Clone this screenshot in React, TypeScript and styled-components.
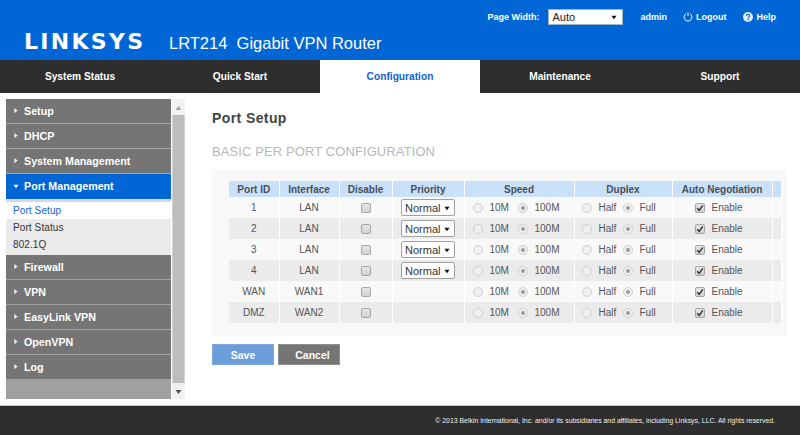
import React from 'react'
import styled, { createGlobalStyle } from 'styled-components'

const GlobalStyle = createGlobalStyle`
    html, body {
        margin: 0;
        padding: 0;
        background: #fff;
        font-family: 'Liberation Sans', Arial, sans-serif;
    }
`

const Page = styled.div`
    width: 800px;
    height: 435px;
    display: flex;
    flex-direction: column;
    overflow: hidden;
`

const Header = styled.header`
    height: 60px;
    background: #0066d6;
    color: #fff;
    display: flex;
    flex-direction: column;
    justify-content: space-between;
    box-sizing: border-box;
    padding: 9px 24px 0 24px;
`

const UserBar = styled.div`
    display: flex;
    justify-content: flex-end;
    align-items: center;
    height: 16px;
    font-size: 9px;
    font-weight: bold;
`

const UserLabel = styled.span`
    margin-right: 9px;
`

const UserName = styled.span`
    margin: 0 16px 0 17px;
`

const UserLink = styled.span`
    display: flex;
    align-items: center;
    gap: 3px;
    margin-left: ${(p: { $gap?: number }) => p.$gap ?? 0}px;
`

const TopSelect = styled.div`
    width: 75px;
    height: 16px;
    box-sizing: border-box;
    background: #fff;
    border: 1px solid #9db4d0;
    color: #222;
    font-size: 11px;
    font-weight: normal;
    display: flex;
    align-items: center;
    justify-content: space-between;
    padding: 0 5px 0 3px;
`

const Brand = styled.div`
    display: flex;
    align-items: baseline;
    height: 31px;
`

const Logo = styled.div`
    font-family: 'DejaVu Sans', sans-serif;
    font-size: 22px;
    font-weight: bold;
    letter-spacing: 2.3px;
    width: 145px;
`

const Product = styled.div`
    font-size: 16.5px;
    white-space: pre;
`

const Nav = styled.nav`
    height: 33px;
    background: #2e2e2e;
    display: flex;
`

const Tab = styled.div<{ $active?: boolean }>`
    width: 160px;
    display: flex;
    align-items: center;
    justify-content: center;
    padding-bottom: 1px;
    box-sizing: border-box;
    font-size: 10.2px;
    font-weight: bold;
    color: ${(p) => (p.$active ? '#0f62d8' : '#fff')};
    background: ${(p) => (p.$active ? '#fff' : 'transparent')};
`

const Body = styled.div`
    flex: 1;
    display: flex;
    min-height: 0;
`

const SideWrap = styled.div`
    display: flex;
    padding: 6px 0 6px 6px;
    flex-shrink: 0;
`

const Menu = styled.div`
    width: 165px;
    display: flex;
    flex-direction: column;
    background: #a0a0a0;
`

const MenuItem = styled.div<{ $open?: boolean }>`
    height: 25px;
    box-sizing: border-box;
    flex-shrink: 0;
    display: flex;
    align-items: center;
    gap: 5px;
    padding-left: 7px;
    font-size: 10.7px;
    font-weight: bold;
    color: #fff;
    background: ${(p) => (p.$open ? '#0066d6' : '#757575')};
    border-bottom: 1px solid ${(p) => (p.$open ? '#0066d6' : '#a3a3a3')};
`

const SubMenu = styled.div`
    background: #ebebeb;
    padding: 3px 0 2px;
    flex-shrink: 0;
    box-shadow: inset 0 3px 0 #d8d8d8;
`

const SubItem = styled.div<{ $active?: boolean }>`
    height: 17px;
    padding-left: 7px;
    display: flex;
    align-items: center;
    font-size: 10px;
    letter-spacing: 0.1px;
    color: ${(p) => (p.$active ? '#0f62d8' : '#333')};
    background: ${(p) => (p.$active ? '#fff' : 'transparent')};
`

const Scrollbar = styled.div`
    width: 13px;
    margin-left: 1px;
    display: flex;
    flex-direction: column;
`

const ScrollButton = styled.div`
    height: 16px;
    background: #f1f1f1;
    display: flex;
    align-items: center;
    justify-content: center;
`

const ScrollThumb = styled.div`
    flex: 1;
    background: #bdbdbd;
    border-left: 1px solid #d2d2d2;
    border-right: 1px solid #d2d2d2;
`

const Main = styled.main`
    flex: 1;
    padding: 17px 14px 0 27px;
`

const Title = styled.h1`
    margin: 0;
    font-size: 14px;
    line-height: 16px;
    letter-spacing: 0.4px;
    font-weight: bold;
    color: #444;
`

const Subtitle = styled.h2`
    margin: 18px 0 9px;
    font-size: 13px;
    line-height: 16px;
    letter-spacing: 0.1px;
    font-weight: normal;
    color: #b8b8b8;
`

const Panel = styled.div`
    background: #f8f8f8;
    padding: 12px 5px 13px 17px;
`

const Table = styled.table`
    border-collapse: collapse;
    table-layout: fixed;
    width: 552px;
    font-size: 10px;
    color: #555;
`

const HeadCell = styled.th`
    height: 16px;
    padding: 0;
    background: #c9e0f9;
    font-weight: bold;
    font-size: 10px;
    color: #4a4f57;
    border-right: 1px solid #fff;
`

const Row = styled.tr<{ $shaded: boolean }>`
    height: 21px;
    background: ${(p) => (p.$shaded ? '#ebebeb' : '#f9f9f9')};
`

const Cell = styled.td`
    padding: 0;
    text-align: center;
    border-right: 1px solid #fff;
`

const OptionGroup = styled.div<{ $left: number }>`
    display: flex;
    align-items: center;
    padding-left: ${(p) => p.$left}px;
`

const OptionText = styled.span<{ $width: number }>`
    width: ${(p) => p.$width}px;
    margin-left: 7px;
    text-align: left;
`

const CheckBox = styled.span`
    display: inline-flex;
    align-items: center;
    justify-content: center;
    width: 10px;
    height: 10px;
    box-sizing: border-box;
    border: 1px solid #a6a6a6;
    border-radius: 2px;
    background: linear-gradient(#e6e6e6, #d2d2d2);
    vertical-align: middle;
`

const RadioDot = styled.span<{ $on?: boolean }>`
    display: inline-flex;
    align-items: center;
    justify-content: center;
    width: 10px;
    height: 10px;
    box-sizing: border-box;
    border: 1px solid #d0d0d0;
    border-radius: 50%;
    background: #f0f0f0;
    flex-shrink: 0;

    &::after {
        content: '';
        display: ${(p) => (p.$on ? 'block' : 'none')};
        width: 4px;
        height: 4px;
        border-radius: 50%;
        background: #9a9a9a;
    }
`

const PrioritySelect = styled.div`
    width: 54px;
    height: 17px;
    margin: 0 auto;
    box-sizing: border-box;
    background: #fff;
    border: 1px solid #a0a0a0;
    border-radius: 2px;
    color: #333;
    font-size: 11px;
    display: flex;
    align-items: center;
    justify-content: space-between;
    padding: 0 4px 0 3px;
`

const Actions = styled.div`
    display: flex;
    gap: 4px;
    margin-top: 8px;
`

const ActionButton = styled.div<{ $primary?: boolean }>`
    width: 62px;
    height: 21px;
    box-sizing: border-box;
    display: flex;
    align-items: center;
    justify-content: center;
    padding-left: ${(p) => (p.$primary ? 0 : 7)}px;
    font-size: 10.5px;
    font-weight: bold;
    color: #fff;
    background: ${(p) => (p.$primary ? '#6c9ddb' : '#757575')};
    border: 1px solid ${(p) => (p.$primary ? '#7fa8dc' : '#8f8f8f')};
`

const Footer = styled.footer`
    height: 30px;
    box-sizing: border-box;
    background: #2e2e2e;
    border-top: 1px solid #c8c8c8;
    color: #f0f0f0;
    font-size: 6.9px;
    display: flex;
    align-items: center;
    justify-content: flex-end;
    padding: 0 25px 1px 0;
`

const Triangle = ({ dir, color, size = 6 }: { dir: 'up' | 'down' | 'right'; color: string; size?: number }) => {
    const points = { up: '0,6 3,2 6,6', down: '0,2 6,2 3,6', right: '1,0 5,3 1,6' }[dir]
    return (
        <svg width={size} height={size} viewBox="0 0 6 7">
            <polygon points={points} fill={color} />
        </svg>
    )
}

const LogoutIcon = () => (
    <svg width="10" height="10" viewBox="0 0 10 10" fill="none" stroke="#fff">
        <path d="M3 1.8a3.9 3.9 0 1 0 4 0" strokeWidth="1" />
        <path d="M5 .5v3.5" strokeWidth="1" />
    </svg>
)

const HelpIcon = () => (
    <svg width="10" height="10" viewBox="0 0 10 10">
        <circle cx="5" cy="5" r="5" fill="#dfe8f5" />
        <path d="M3.4 3.9a1.6 1.5 0 1 1 2.4 1.3c-.6.4-.8.6-.8 1.2" fill="none" stroke="#0066d6" strokeWidth="1.1" />
        <rect x="4.4" y="7" width="1.2" height="1.2" fill="#0066d6" />
    </svg>
)

const Tick = () => (
    <svg width="8" height="8" viewBox="0 0 8 8">
        <path d="M1.2 4.2 3.2 6.4 6.8 1.4" fill="none" stroke="#333" strokeWidth="1.5" />
    </svg>
)

const upperMenu = ['Setup', 'DHCP', 'System Management']
const lowerMenu = ['Firewall', 'VPN', 'EasyLink VPN', 'OpenVPN', 'Log']
const columns = [
    ['Port ID', 50],
    ['Interface', 60],
    ['Disable', 53],
    ['Priority', 72],
    ['Speed', 110],
    ['Duplex', 98],
    ['Auto Negotiation', 100],
    ['', 9],
] as const
const ports = [
    { id: '1', name: 'LAN', priority: true },
    { id: '2', name: 'LAN', priority: true },
    { id: '3', name: 'LAN', priority: true },
    { id: '4', name: 'LAN', priority: true },
    { id: 'WAN', name: 'WAN1', priority: false },
    { id: 'DMZ', name: 'WAN2', priority: false },
]

export default function App() {
    return (
        <Page>
            <GlobalStyle />
            <Header>
                <UserBar>
                    <UserLabel>Page Width:</UserLabel>
                    <TopSelect>
                        Auto
                        <Triangle dir="down" color="#111" />
                    </TopSelect>
                    <UserName>admin</UserName>
                    <UserLink>
                        <LogoutIcon />
                        Logout
                    </UserLink>
                    <UserLink $gap={17}>
                        <HelpIcon />
                        Help
                    </UserLink>
                </UserBar>
                <Brand>
                    <Logo>LINKSYS</Logo>
                    <Product>LRT214  Gigabit VPN Router</Product>
                </Brand>
            </Header>
            <Nav>
                <Tab>System Status</Tab>
                <Tab>Quick Start</Tab>
                <Tab $active>Configuration</Tab>
                <Tab>Maintenance</Tab>
                <Tab>Support</Tab>
            </Nav>
            <Body>
                <SideWrap>
                    <Menu>
                        {upperMenu.map((m) => (
                            <MenuItem key={m}>
                                <Triangle dir="right" color="#eee" />
                                {m}
                            </MenuItem>
                        ))}
                        <MenuItem $open>
                            <Triangle dir="down" color="#fff" />
                            Port Management
                        </MenuItem>
                        <SubMenu>
                            <SubItem $active>Port Setup</SubItem>
                            <SubItem>Port Status</SubItem>
                            <SubItem>802.1Q</SubItem>
                        </SubMenu>
                        {lowerMenu.map((m) => (
                            <MenuItem key={m}>
                                <Triangle dir="right" color="#eee" />
                                {m}
                            </MenuItem>
                        ))}
                    </Menu>
                    <Scrollbar>
                        <ScrollButton>
                            <Triangle dir="up" color="#a8a8a8" size={7} />
                        </ScrollButton>
                        <ScrollThumb />
                        <ScrollButton>
                            <Triangle dir="down" color="#555" size={7} />
                        </ScrollButton>
                    </Scrollbar>
                </SideWrap>
                <Main>
                    <Title>Port Setup</Title>
                    <Subtitle>BASIC PER PORT CONFIGURATION</Subtitle>
                    <Panel>
                        <Table>
                            <colgroup>
                                {columns.map(([label, width]) => (
                                    <col key={label} width={width} />
                                ))}
                            </colgroup>
                            <thead>
                                <tr>
                                    {columns.map(([label]) => (
                                        <HeadCell key={label}>{label}</HeadCell>
                                    ))}
                                </tr>
                            </thead>
                            <tbody>
                                {ports.map((port, i) => (
                                    <Row key={port.id} $shaded={i % 2 === 1}>
                                        <Cell>{port.id}</Cell>
                                        <Cell>{port.name}</Cell>
                                        <Cell>
                                            <CheckBox />
                                        </Cell>
                                        <Cell>
                                            {port.priority && (
                                                <PrioritySelect>
                                                    Normal
                                                    <Triangle dir="down" color="#111" />
                                                </PrioritySelect>
                                            )}
                                        </Cell>
                                        <Cell>
                                            <OptionGroup $left={8}>
                                                <RadioDot />
                                                <OptionText $width={28}>10M</OptionText>
                                                <RadioDot $on />
                                                <OptionText $width={30}>100M</OptionText>
                                            </OptionGroup>
                                        </Cell>
                                        <Cell>
                                            <OptionGroup $left={7}>
                                                <RadioDot />
                                                <OptionText $width={24}>Half</OptionText>
                                                <RadioDot $on />
                                                <OptionText $width={20}>Full</OptionText>
                                            </OptionGroup>
                                        </Cell>
                                        <Cell>
                                            <OptionGroup $left={22}>
                                                <CheckBox>
                                                    <Tick />
                                                </CheckBox>
                                                <OptionText $width={40}>Enable</OptionText>
                                            </OptionGroup>
                                        </Cell>
                                        <Cell />
                                    </Row>
                                ))}
                            </tbody>
                        </Table>
                    </Panel>
                    <Actions>
                        <ActionButton $primary>Save</ActionButton>
                        <ActionButton>Cancel</ActionButton>
                    </Actions>
                </Main>
            </Body>
            <Footer>© 2013 Belkin International, Inc. and/or its subsidiaries and affiliates, including Linksys, LLC. All rights reserved.</Footer>
        </Page>
    )
}
